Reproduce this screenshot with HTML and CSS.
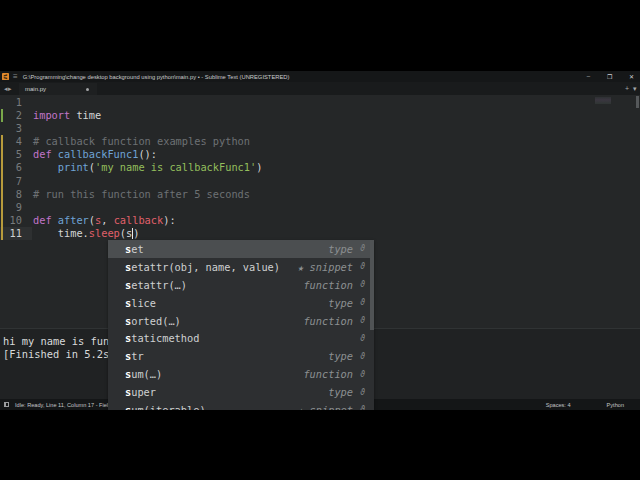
FILE: index.html
```html
<!doctype html>
<html>
<head>
    <meta charset="utf-8">
    <title>main.py - Sublime Text</title>
    <link rel="stylesheet" href="styles.css">
</head>
<body>
<div class="frame">
    <div class="letterbox top"></div>
    <div class="window">
        <div class="titlebar">
            <svg class="logo" width="8" height="8" viewBox="0 0 8 8">
                <rect x="0" y="0" width="8" height="8" rx="1" fill="#e3892a"/>
                <path d="M2 2.5 L6 1.5 L6 3 L2 4 Z M2 4.5 L6 5.5 L6 7 L2 6 Z" fill="#3a2a14"/>
            </svg>
            <span class="hamburger">&#8801;</span>
            <span class="title">G:\Programming\change desktop background using python\main.py • - Sublime Text (UNREGISTERED)</span>
            <div class="controls">
                <span>&#8211;</span>
                <span>&#10064;</span>
                <span>&#10005;</span>
            </div>
        </div>
        <div class="tabbar">
            <span class="arrows">&#9666;&#9656;</span>
            <div class="tab">
                <span>main.py</span>
                <span class="dot"></span>
            </div>
            <div class="tabtools">+ &#9662;</div>
        </div>
        <div class="editor">
            <div class="gutter">
                <div class="ln">1</div>
                <div class="ln mod-add">2</div>
                <div class="ln">3</div>
                <div class="ln mod-chg">4</div>
                <div class="ln mod-chg">5</div>
                <div class="ln mod-chg">6</div>
                <div class="ln mod-chg">7</div>
                <div class="ln mod-chg">8</div>
                <div class="ln mod-chg">9</div>
                <div class="ln mod-chg">10</div>
                <div class="ln mod-chg current">11</div>
            </div>
            <div class="code">
                <div class="line"></div>
                <div class="line"><span class="kw">import</span> time</div>
                <div class="line"></div>
                <div class="line"><span class="cm"># callback function examples python</span></div>
                <div class="line"><span class="kw">def</span> <span class="fn">callbackFunc1</span>():</div>
                <div class="line">    <span class="fn">print</span>(<span class="st">'my name is callbackFunc1'</span>)</div>
                <div class="line"></div>
                <div class="line"><span class="cm"># run this function after 5 seconds</span></div>
                <div class="line"></div>
                <div class="line"><span class="kw">def</span> <span class="fn">after</span>(<span class="pa">s</span>, <span class="pa">callback</span>):</div>
                <div class="line">    time.<span class="pa">sleep</span>(s<span class="caret"></span>)</div>
            </div>
            <div class="minimap"></div>
            <div class="vscroll"></div>
        </div>
        <div class="panel">
            <div class="out">hi my name is fun</div>
            <div class="out">[Finished in 5.2s</div>
        </div>
        <div class="statusbar">
            <span class="sb-icon"></span>
            <span class="sb-text">Idle: Ready, Line 11, Column 17 - Field</span>
            <span class="sb-right">Spaces: 4</span>
            <span class="sb-lang">Python</span>
        </div>

        <div class="popup">
            <div class="item active"><span class="name"><b>s</b>et</span><span class="kind">type</span><span class="info">&#977;</span></div>
            <div class="item"><span class="name"><b>s</b>etattr(obj, name, value)</span><span class="kind">&#9733; snippet</span><span class="info">&#977;</span></div>
            <div class="item"><span class="name"><b>s</b>etattr(…)</span><span class="kind">function</span><span class="info">&#977;</span></div>
            <div class="item"><span class="name"><b>s</b>lice</span><span class="kind">type</span><span class="info">&#977;</span></div>
            <div class="item"><span class="name"><b>s</b>orted(…)</span><span class="kind">function</span><span class="info">&#977;</span></div>
            <div class="item"><span class="name"><b>s</b>taticmethod</span><span class="kind"></span><span class="info">&#977;</span></div>
            <div class="item"><span class="name"><b>s</b>tr</span><span class="kind">type</span><span class="info">&#977;</span></div>
            <div class="item"><span class="name"><b>s</b>um(…)</span><span class="kind">function</span><span class="info">&#977;</span></div>
            <div class="item"><span class="name"><b>s</b>uper</span><span class="kind">type</span><span class="info">&#977;</span></div>
            <div class="item"><span class="name"><b>s</b>um(iterable)</span><span class="kind">&#9733; snippet</span><span class="info">&#977;</span></div>
            <div class="pscroll"></div>
        </div>
    </div>
    <div class="letterbox bottom"></div>
</div>
</body>
</html>
```

FILE: styles.css
```css
html, body {
    margin: 0;
    padding: 0;
    background: #000;
}

.frame {
    width: 640px;
    height: 480px;
    display: flex;
    flex-direction: column;
    overflow: hidden;
}

.letterbox.top {
    height: 71px;
    background: #000;
}

.letterbox.bottom {
    flex: 1;
    background: #000;
}

.window {
    position: relative;
    height: 339px;
    display: flex;
    flex-direction: column;
    overflow: hidden;
    background: #252728;
    font-family: "Liberation Sans", Arial, sans-serif;
}

/* title bar */
.titlebar {
    height: 11px;
    background: #151718;
    display: flex;
    align-items: center;
    color: #c9cbcc;
    font-size: 5.8px;
}

.logo {
    margin-left: 2px;
    width: 7px;
    height: 7px;
}

.hamburger {
    color: #8a8d8f;
    font-size: 8px;
    margin: 0 5px 0 4px;
}

.title {
    white-space: nowrap;
}

.controls {
    margin-left: auto;
    display: flex;
    gap: 17px;
    padding-right: 6px;
    color: #d0d2d3;
    font-size: 6px;
}

/* tabs */
.tabbar {
    height: 13px;
    background: #191b1c;
    display: flex;
    align-items: flex-end;
    color: #bfc1c2;
    font-size: 6px;
}

.arrows {
    align-self: center;
    width: 19px;
    padding-left: 4px;
    box-sizing: border-box;
    color: #9a9c9e;
    font-size: 7px;
    letter-spacing: 0;
}

.tab {
    width: 78px;
    height: 12px;
    background: #1e2021;
    display: flex;
    align-items: center;
    justify-content: space-between;
    padding: 0 8px 0 6px;
    box-sizing: border-box;
    color: #cfd1d2;
}

.tab .dot {
    width: 3px;
    height: 3px;
    border-radius: 50%;
    background: #a3a5a7;
}

.tabtools {
    margin-left: auto;
    align-self: center;
    padding-right: 2px;
    color: #a5a7a9;
    font-size: 7px;
    letter-spacing: 1px;
}

/* editor */
.editor {
    height: 232px;
    display: flex;
    position: relative;
    background: #252728;
    font-family: "DejaVu Sans Mono", monospace;
    font-size: 10.3px;
    padding-top: 1px;
}

.gutter {
    width: 32px;
    flex: none;
}

.ln {
    height: 13.1px;
    line-height: 13.1px;
    text-align: right;
    padding-right: 10px;
    color: #787b7d;
    position: relative;
}

.ln.mod-add::before,
.ln.mod-chg::before {
    content: "";
    position: absolute;
    left: 1px;
    top: 0;
    bottom: 0;
    width: 2px;
}

.ln.mod-add::before {
    background: #7aa84a;
}

.ln.mod-chg::before {
    background: #b89b3c;
}

.ln.current {
    background: #2e3031;
    color: #d0d2d3;
}

.code {
    flex: 1;
    padding-left: 1px;
}

.line {
    height: 13.1px;
    line-height: 13.1px;
    white-space: pre;
    color: #d4d6d7;
}

.kw { color: #c175c9; }
.fn { color: #6fa3d6; }
.st { color: #93bf5c; }
.cm { color: #6d7174; }
.pa { color: #e0606a; }

.caret {
    display: inline-block;
    width: 1px;
    height: 11px;
    background: #e8e8e8;
    vertical-align: -2px;
}

.minimap {
    position: absolute;
    left: 595px;
    top: 2px;
    width: 16px;
    height: 7px;
    background: linear-gradient(#2e3133, #3a3640 40%, #2f3533);
}

.vscroll {
    position: absolute;
    right: 1px;
    top: 1px;
    width: 3px;
    height: 12px;
    background: #55585a;
}

/* output panel */
.panel {
    height: 71px;
    border-top: 1px solid #303334;
    background: #202223;
    font-family: "DejaVu Sans Mono", monospace;
    font-size: 10.4px;
    padding: 6px 0 0 3px;
    box-sizing: border-box;
    color: #d8dadb;
}

.out {
    height: 13px;
    line-height: 13px;
    white-space: pre;
}

/* status bar */
.statusbar {
    flex: 1;
    background: #141617;
    display: flex;
    align-items: center;
    color: #c4c6c7;
    font-size: 5.6px;
}

.sb-icon {
    width: 5px;
    height: 5px;
    border: 1px solid #9b9d9f;
    border-left-width: 2px;
    margin: 0 6px 0 4px;
    box-sizing: border-box;
}

.sb-right {
    margin-left: auto;
}

.sb-lang {
    margin: 0 16px 0 36px;
}

/* completion popup */
.popup {
    position: absolute;
    left: 108px;
    top: 169px;
    width: 266px;
    height: 190px;
    background: #2d2f31;
    font-family: "DejaVu Sans Mono", monospace;
    font-size: 10.3px;
    color: #cfd1d2;
    box-shadow: 0 1px 3px rgba(0, 0, 0, 0.4);
}

.item {
    height: 17.9px;
    display: flex;
    align-items: center;
    padding-left: 17px;
    padding-right: 5px;
    margin-right: 4px;
}

.item.active {
    background: #4b4e50;
}

.item .name {
    white-space: pre;
}

.item .name b {
    color: #ffffff;
    font-weight: bold;
}

.item .kind {
    margin-left: auto;
    font-style: italic;
    color: #8c8f91;
    white-space: pre;
}

.item .info {
    width: 12px;
    text-align: right;
    font-style: italic;
    font-size: 8px;
    color: #7f8284;
}

.pscroll {
    position: absolute;
    right: 0;
    top: 0;
    width: 4px;
    height: 90px;
    background: #505355;
}
```
